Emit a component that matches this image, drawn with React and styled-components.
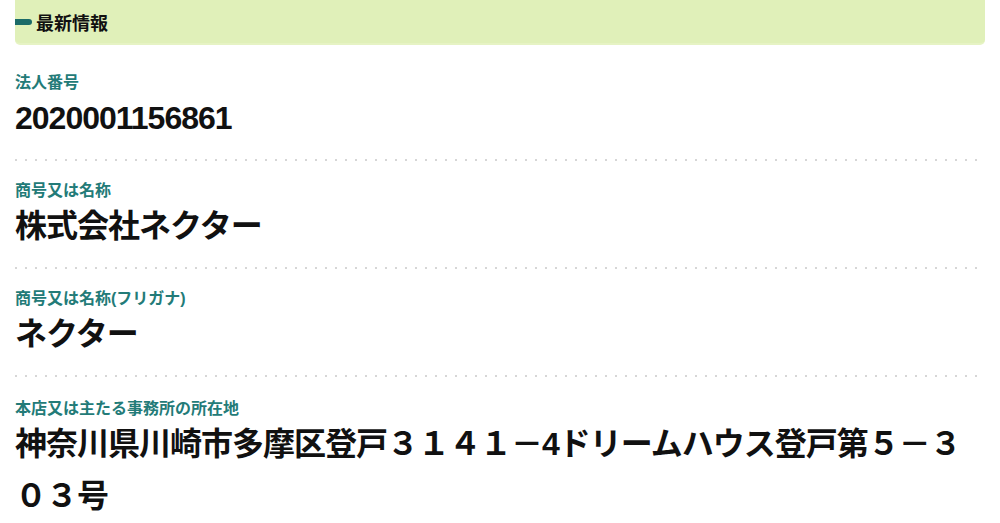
import React from 'react'
import styled, { createGlobalStyle } from 'styled-components';

const GlobalStyle = createGlobalStyle`
  body {
    margin: 0;
    background: #fff;
    font-family: "Liberation Sans", "Noto Sans CJK JP", sans-serif;
    color: #111;
  }
`;

const Page = styled.div`
  padding: 0 15px;
`;

const Heading = styled.h2`
  display: flex;
  align-items: center;
  gap: 4px;
  height: 45px;
  margin: 0 0 8px;
  padding: 0;
  background: #e0f0b9;
  border-bottom: 2px solid #e6f3c4;
  box-sizing: border-box;
  border-radius: 0 0 5px 5px;
  font-size: 18px;
  font-weight: bold;
  color: #111;
  &::before {
    content: '';
    width: 17px;
    height: 6px;
    border-radius: 0 3px 3px 0;
    background: #1b6b68;
  }
`;

const Item = styled.div`
  padding: 21px 0 17px;
  background-image: linear-gradient(to right, #d6d6d6 2px, transparent 2px);
  background-size: 10px 2px;
  background-repeat: repeat-x;
  background-position: left bottom;
  &:last-child {
    background: none;
    padding-top: 23px;
  }
`;

const Label = styled.div`
  font-size: 16px;
  line-height: 18px;
  font-weight: bold;
  color: #237b78;
`;

const Value = styled.div`
  font-size: 32px;
  line-height: 52px;
  font-weight: bold;
  letter-spacing: -1px;
  color: #111;
`;

const items = [
  { label: '法人番号', value: '2020001156861' },
  { label: '商号又は名称', value: '株式会社ネクター' },
  { label: '商号又は名称(フリガナ)', value: 'ネクター' },
  { label: '本店又は主たる事務所の所在地', value: '神奈川県川崎市多摩区登戸３１４１－4ドリームハウス登戸第５－３０３号' },
];

export default function App() {
  return (
    <Page>
      <GlobalStyle />
      <Heading>最新情報</Heading>
      {items.map((it) => (
        <Item key={it.label}>
          <Label>{it.label}</Label>
          <Value>{it.value}</Value>
        </Item>
      ))}
    </Page>
  )
}
